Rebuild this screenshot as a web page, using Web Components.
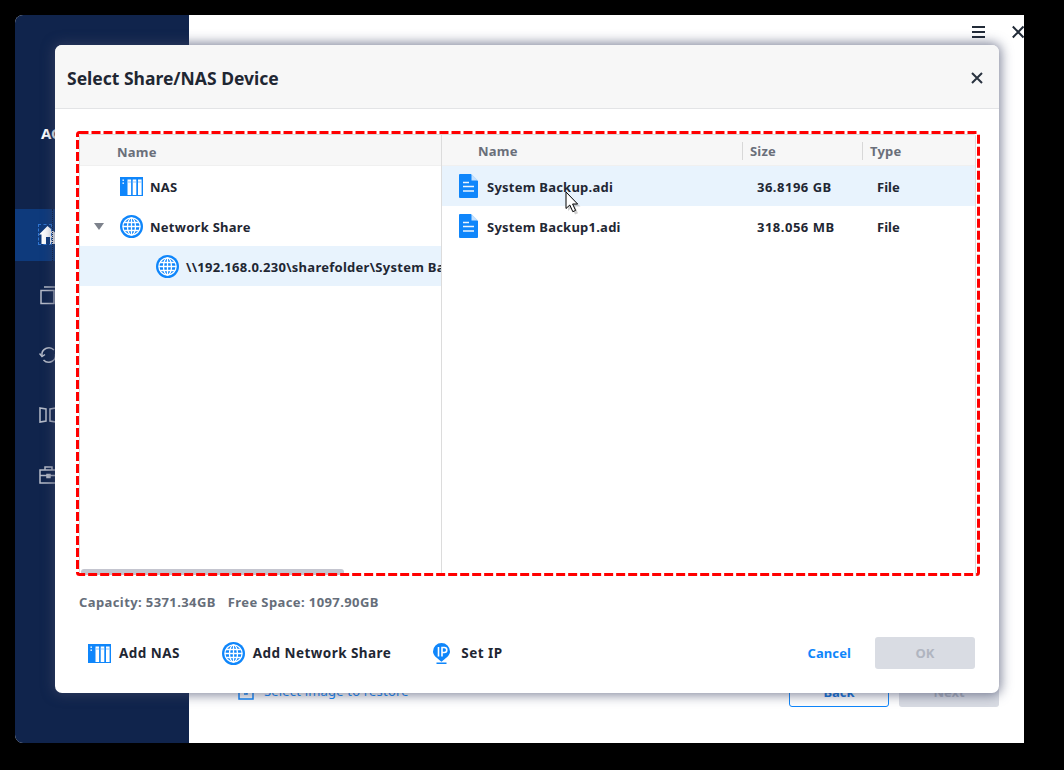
<!DOCTYPE html>
<html><head><meta charset="utf-8">
<style>
html,body{margin:0;padding:0;background:#000;height:770px;overflow:hidden}
body{font-family:"Noto Sans","Open Sans",sans-serif;font-weight:700;font-size:13px;color:#1f2733}
</style></head>
<body>
<app-window>
  <span slot="logo">AOMEI</span>
  <nav-item slot="nav" icon="home" active></nav-item>
  <nav-item slot="nav" icon="copy"></nav-item>
  <nav-item slot="nav" icon="sync"></nav-item>
  <nav-item slot="nav" icon="clone"></nav-item>
  <nav-item slot="nav" icon="tools"></nav-item>
  <share-dialog slot="dialog" heading="Select Share/NAS Device">
    <device-panel slot="panel">
      <tree-row slot="tree" icon="nas">NAS</tree-row>
      <tree-row slot="tree" icon="globe" expander>Network Share</tree-row>
      <tree-row slot="tree" icon="globe" level="1" selected>\\192.168.0.230\sharefolder\System Backup</tree-row>
      <file-row slot="files" size="36.8196 GB" kind="File" selected>System Backup.adi</file-row>
      <file-row slot="files" size="318.056 MB" kind="File">System Backup1.adi</file-row>
    </device-panel>
    <span slot="info">Capacity: 5371.34GB</span>
    <span slot="info">Free Space: 1097.90GB</span>
    <action-link slot="actions" icon="nas">Add NAS</action-link>
    <action-link slot="actions" icon="globe">Add Network Share</action-link>
    <action-link slot="actions" icon="pin">Set IP</action-link>
  </share-dialog>
</app-window>

<script>
const BLUE='#0f86fb';
const ICONS={
 nas:`<svg width="23" height="19" viewBox="0 0 23 19"><rect width="23" height="19" fill="${BLUE}"/><path d="M7.500 2.500h3.600v15.500H7.500zM12.700 2.500h3.600v15.500h-3.600zM18 2.500h3.600v15.500H18z" fill="#fff"/><path d="M7.500 5h3.600M12.700 5h3.600M18 5h3.600" stroke="#8cc5fd" stroke-width="1"/><rect x="2.500" y="2.500" width="1.400" height="1.400" fill="#fff"/><rect x="2.500" y="5.500" width="1.400" height="1.400" fill="#fff"/></svg>`,
 globe:`<svg width="23" height="23" viewBox="0 0 23 23"><circle cx="11.500" cy="11.500" r="11.500" fill="${BLUE}"/><g fill="none" stroke="#fff" stroke-width="1.300"><circle cx="11.500" cy="11.500" r="8.600"/><ellipse cx="11.500" cy="11.500" rx="4" ry="8.600"/><path d="M11.500 2.900v17.200M2.900 11.500h17.200M4.200 7.500h14.600M4.200 15.500h14.600"/></g></svg>`,
 pin:`<svg width="17" height="21" viewBox="0 0 17 21" style="display:block;margin-right:3px"><path d="M8.500 0a8.500 8.500 0 0 1 8.500 8.500c0 4-4.500 7-8.500 10.200C4.500 15.500 0 12.500 0 8.500A8.500 8.500 0 0 1 8.500 0z" fill="${BLUE}"/><rect x="3.500" y="19.500" width="10" height="1.500" fill="${BLUE}"/><path d="M5.500 4v9.500" stroke="#fff" stroke-width="1.600"/><path d="M9 13.500V4.500h2.300a2.500 2.500 0 0 1 0 5H9" fill="none" stroke="#fff" stroke-width="1.600"/></svg>`,
 file:`<svg width="19" height="24" viewBox="0 0 19 24"><path d="M1 0H12l7 7v16a1 1 0 0 1-1 1H1a1 1 0 0 1-1-1V1a1 1 0 0 1 1-1z" fill="${BLUE}"/><path d="M12.500 0l6.500 6.500h-6.500z" fill="#c4e1fe"/><path d="M4 8.500h6M4 12.500h11M4 17h11" stroke="#fff" stroke-width="1.500" opacity=".92"/></svg>`,
 home:`<svg width="19" height="20" viewBox="0 0 19 20"><path d="M8.500 1L0 9.500h2.500V19h4.500v-7h4v7h5V9.500H18.500z" fill="#fff"/></svg>`,
 copy:`<svg width="19" height="20" viewBox="0 0 19 20" fill="none" stroke="#b6bcc9" stroke-width="1.500"><rect x="2" y="5.500" width="13" height="13"/><path d="M5 2h13"/></svg>`,
 sync:`<svg width="19" height="20" viewBox="0 0 19 20" fill="none" stroke="#b6bcc9" stroke-width="1.500"><path d="M3 11a7 7 0 0 1 12-6M16.500 9a7 7 0 0 1-12 6"/><path d="M0.500 8.500L3 11.500l3-2"/></svg>`,
 clone:`<svg width="19" height="20" viewBox="0 0 19 20" fill="none" stroke="#b6bcc9" stroke-width="1.500"><path d="M1 3l6 1v12l-6 1zM11 4l6-1v14l-6-1z"/></svg>`,
 tools:`<svg width="19" height="20" viewBox="0 0 19 20" fill="none" stroke="#b6bcc9" stroke-width="1.500"><rect x="1" y="5" width="17" height="13"/><path d="M6 5V2h7v3M1 10.500h17"/><rect x="8" y="9.500" width="3" height="3" fill="#b6bcc9"/></svg>`
};
function def(name,html){
  customElements.define(name,class extends HTMLElement{
    connectedCallback(){
      if(this.shadowRoot)return;
      const r=this.attachShadow({mode:'open'});
      r.innerHTML=typeof html==='function'?html(this):html;
    }
  });
}
def('app-window',`<style>
:host{display:flex;position:relative;width:1009px;height:728px;margin:15px 0 0 15px;background:#fff;overflow:hidden;border-radius:8px 0 0 8px}
.side{width:174px;background:#10244c;display:flex;flex-direction:column;flex:none}
.logo{height:20px;margin:108px 0 0 26px;color:#fff;font-size:15px;line-height:20px}
nav{display:flex;flex-direction:column;gap:8px;margin-top:66px}
main{flex:1;display:flex;flex-direction:column;padding:0 25px 36px 48px;min-width:0}
.top{display:flex;justify-content:flex-end;align-items:center;gap:27px;height:33px;margin-right:-25px;flex:none}
.burger{width:13px;height:12px;border-top:2px solid #222b38;border-bottom:2px solid #222b38;position:relative;box-sizing:border-box}
.burger::after{content:"";position:absolute;left:0;right:0;top:3px;height:2px;background:#222b38}
.foot{margin-top:auto;display:flex;align-items:center;height:28px}
.sel{display:flex;align-items:center;gap:10px;flex:1;color:#0f86fb;font-weight:400;font-size:13px;letter-spacing:.18px;padding-left:1px;margin-top:-4px}
.btn{width:100px;height:28px;box-sizing:border-box;border-radius:3px;display:flex;align-items:center;justify-content:center;font-size:13px;padding-bottom:3px}
.back{border:1px solid #0f86fb;color:#0f6fd8;margin-right:10px}
.next{background:#d9dce3;color:#a9afbb}
</style>
<div class="side"><div class="logo"><slot name="logo"></slot></div><nav><slot name="nav"></slot></nav></div>
<main>
 <div class="top"><div class="burger"></div><svg width="12" height="14" viewBox="0 0 12 14"><path d="M.8 1.500L11.500 12.500M11.500 1.500L.8 12.500" stroke="#222b38" stroke-width="2"/></svg></div>
 <div class="foot"><div class="sel"><svg width="16" height="17" viewBox="0 0 16 17" fill="none" stroke="#0f86fb" stroke-width="1.500"><path d="M1 1v15h14V1"/><path d="M6 6h3v5H6"/></svg>Select image to restore</div><div class="btn back">Back</div><div class="btn next">Next</div></div>
</main>
<slot name="dialog"></slot>`);
def('nav-item',h=>{const a=h.hasAttribute('active');return `<style>
:host{display:flex;align-items:center;height:52px;padding-left:24px;position:relative;background:${a?'#0e3a7c':'transparent'}}
svg{display:block}
.f{position:absolute;left:24px;top:16px;width:12px;height:19px;outline:1px dashed #2f74d0}
.d{position:absolute;left:37px;top:0;bottom:0;border-left:1px dotted #0a1c3e}
</style>${a?'<span class="f"></span><span class="d"></span>':''}${ICONS[h.getAttribute('icon')]}`});
def('share-dialog',h=>`<style>
:host{position:absolute;left:40px;top:30px;width:944px;height:648px;background:#fff;border-radius:7px;box-shadow:0 0 12px 2px rgba(60,68,100,.65);display:flex;flex-direction:column;color:#1f2733}
header{flex:none;background:#f7f7f7;border-bottom:1px solid #e3e4e6;border-radius:7px 7px 0 0;display:flex;align-items:center;justify-content:space-between;padding:3px 15px 0 12px;height:60px}
h1{margin:0;font-size:17.500px;font-weight:700;color:#1f2733}
.body{padding:25px 24px 0;display:flex;flex-direction:column;flex:1}
.info{display:flex;gap:12px;color:#666e7a;font-size:13px;letter-spacing:.4px;height:16px;line-height:16px;margin-top:18px}
.bottom{display:flex;align-items:center;margin-top:21px;height:44px}
.acts{display:flex;gap:42px;flex:1;padding-left:9px}
.cancel{color:#0f86fb;margin-right:24px;font-size:13px;letter-spacing:.1px}
.ok{width:100px;height:32px;background:#d9dce3;color:#b0b5c0;border-radius:3px;display:flex;align-items:center;justify-content:center;font-size:13px}
</style>
<header><h1>${h.getAttribute('heading')}</h1><svg width="14" height="14" viewBox="0 0 14 14"><path d="M2 2l10 10M12 2L2 12" stroke="#2a3340" stroke-width="2"/></svg></header>
<div class="body"><slot name="panel"></slot>
<div class="info"><slot name="info"></slot></div>
<div class="bottom"><div class="acts"><slot name="actions"></slot></div><span class="cancel">Cancel</span><div class="ok">OK</div></div></div>`);
def('device-panel',`<style>
:host{display:block;position:relative;height:442px;flex:none}
.panel{display:flex;height:100%;box-sizing:border-box;border:1px solid #dcdcdc;border-bottom:0;border-radius:3px 3px 0 0;background:#fff;width:897px}
.left{width:361px;flex:none;border-right:1px solid #dcdcdc;position:relative;overflow:hidden}
.right{flex:1;min-width:0}
.hd{height:31px;background:#f7f7f7;display:flex;align-items:center;color:#6a6f7a;font-size:13px;border-bottom:1px solid #f0f0f0;box-sizing:border-box;letter-spacing:.2px}
.left .hd{padding:3px 0 0 37px}
.right .hd{padding-top:1px}
.right .hd div:nth-child(1){width:300px;padding-left:36px;box-sizing:border-box}
.right .hd div:nth-child(2){width:120px;padding-left:7px;box-sizing:border-box;border-left:1px solid #d8d8d8}
.right .hd div:nth-child(3){padding-left:7px;border-left:1px solid #d8d8d8}
.bar{position:absolute;left:1px;bottom:1px;width:263px;height:6px;border-radius:3px;background:#c4c5cf}
.red{position:absolute;left:-3px;top:-3px;pointer-events:none}
</style>
<div class="panel"><div class="left"><div class="hd">Name</div><slot name="tree"></slot><div class="bar"></div></div>
<div class="right"><div class="hd"><div>Name</div><div>Size</div><div>Type</div></div><slot name="files"></slot></div></div>
<svg class="red" width="904" height="445" viewBox="0 0 904 445"><rect x="1.500" y="1.500" width="901" height="442" rx="2" fill="none" stroke="#ff0000" stroke-width="3" stroke-dasharray="9 3"/></svg>`);
def('tree-row',h=>{const l=+h.getAttribute('level')||0;return `<style>
:host{display:flex;align-items:center;height:40px;background:${h.hasAttribute('selected')?'#e8f3fd':'#fff'};padding-left:${40+36*l}px;white-space:nowrap;position:relative;letter-spacing:.27px}
.ic{width:23px;height:23px;display:flex;align-items:center;margin-right:7px;flex:none}
.t{padding-top:2px}
.ex{position:absolute;left:14px;top:17px;width:0;height:0;border:5.500px solid transparent;border-top:7px solid #7d828c;border-bottom:0}
</style>${h.hasAttribute('expander')?'<span class="ex"></span>':''}<span class="ic">${ICONS[h.getAttribute('icon')]}</span><span class="t"><slot></slot></span>`});
def('file-row',h=>`<style>
:host{display:flex;align-items:center;height:40px;background:${h.hasAttribute('selected')?'#e8f3fd':'#fff'};padding-left:17px;white-space:nowrap;position:relative;${h.hasAttribute('selected')?'z-index:1;':''}}
.ic{width:19px;height:24px;margin-right:9px;flex:none}
.n{width:270px;letter-spacing:.24px;padding-top:2px}.s{width:120px;letter-spacing:.5px;padding-top:2px}.k{padding-top:2px}
.cursor{position:absolute;left:123px;top:25px}
</style><span class="ic">${ICONS.file}</span><span class="n"><slot></slot></span><span class="s">${h.getAttribute('size')}</span><span class="k">${h.getAttribute('kind')}</span>
${h.hasAttribute('selected')?`<svg class="cursor" width="18" height="26" viewBox="0 0 18 26"><path d="M3 4v16l4-3.500 3 7 3-1.300-3-6.700h5.500z" fill="#777" opacity=".35"/><path d="M1 1v16.500l3.800-3.500 3 6.700 2.800-1.300-3-6.400h5z" fill="#fff" stroke="#000" stroke-width="1"/></svg>`:''}`);
def('action-link',h=>`<style>
:host{display:flex;align-items:center;gap:8px;white-space:nowrap;font-size:13.500px;letter-spacing:.45px;color:#1f2733}
.ic{display:flex;align-items:center}
</style><span class="ic">${ICONS[h.getAttribute('icon')]}</span><slot></slot>`);
</script>
</body></html>
